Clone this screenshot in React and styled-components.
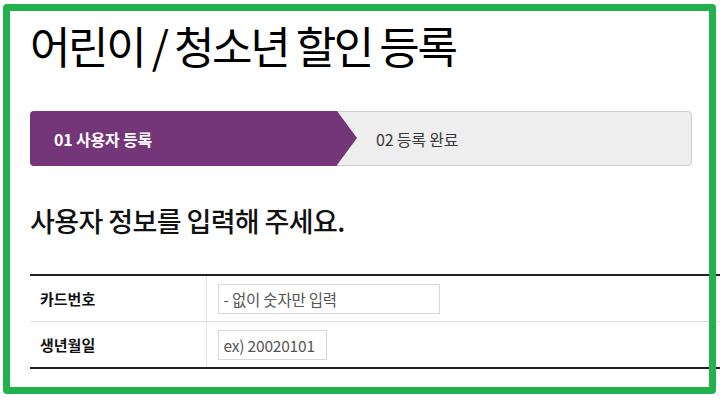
import React from 'react';
import styled, { createGlobalStyle } from 'styled-components';

const GlobalStyle = createGlobalStyle`
  html, body {
    margin: 0;
    padding: 0;
    background: #fff;
    overflow: hidden;
  }
  body {
    font-family: "Noto Sans CJK KR", "Noto Sans", sans-serif;
    color: #111;
  }
`;

const Page = styled.div`
  width: 720px;
  height: 401px;
  padding: 21px 0 0 30px;
  box-sizing: border-box;
`;

// green marker frame drawn over the screenshot
const Frame = styled.div`
  position: fixed;
  left: 3px;
  top: 4px;
  width: 713px;
  height: 390px;
  box-sizing: border-box;
  border: 7px solid #22b14c;
  border-radius: 4px;
  pointer-events: none;
`;

const Title = styled.h1`
  margin: 0;
  font-size: 44px;
  line-height: 48px;
  font-weight: 400;
  letter-spacing: -2.4px;
  color: #000;
`;

const Steps = styled.ol`
  display: flex;
  list-style: none;
  margin: 42px 0 0;
  padding: 0;
  width: 662px;
  height: 55px;
  box-sizing: border-box;
  border: 1px solid #cfcfcf;
  border-radius: 4px;
  background: #eeeeee;
`;

const Step = styled.li`
  position: relative;
  display: flex;
  align-items: center;
  box-sizing: border-box;
  font-size: 16px;
  letter-spacing: -0.2px;
  width: ${(p) => (p.$active ? '307px' : 'auto')};
  flex: ${(p) => (p.$active ? 'none' : '1')};
  margin: ${(p) => (p.$active ? '-1px 0 -1px -1px' : '0')};
  padding-left: ${(p) => (p.$active ? '24px' : '39px')};
  background: ${(p) => (p.$active ? '#743679' : 'transparent')};
  border-radius: ${(p) => (p.$active ? '4px 0 0 4px' : '0')};
  color: ${(p) => (p.$active ? '#fff' : '#3a3a3a')};
  font-weight: ${(p) => (p.$active ? 700 : 400)};

  ${(p) =>
    p.$active &&
    `
    &::after {
      content: '';
      position: absolute;
      left: 100%;
      top: 0;
      border-left: 20px solid #743679;
      border-top: 27.5px solid transparent;
      border-bottom: 27.5px solid transparent;
    }
  `}
`;

const Subtitle = styled.h2`
  margin: 38px 0 0;
  font-size: 27px;
  line-height: 34px;
  font-weight: 500;
  letter-spacing: -0.6px;
  color: #111;
`;

const Table = styled.table`
  margin-top: 36px;
  width: 690px;
  border-collapse: collapse;
  border-top: 2px solid #222;
  border-bottom: 2px solid #222;
`;

const Row = styled.tr`
  & + & {
    border-top: 1px solid #dcdcdc;
  }
`;

const Label = styled.th`
  width: 176px;
  height: 45px;
  padding: 0 0 0 10px;
  box-sizing: border-box;
  text-align: left;
  font-size: 15px;
  font-weight: 700;
  color: #111;
  border-right: 1px solid #e4e4e4;
`;

const Cell = styled.td`
  padding: 0 0 0 11px;
  height: 45px;
`;

const Input = styled.input`
  display: block;
  width: ${(p) => p.$width}px;
  height: 30px;
  box-sizing: border-box;
  border: 1px solid #d8d8d8;
  padding: 0 5px;
  font-family: "Noto Sans CJK KR", "Noto Sans", sans-serif;
  font-size: 15.5px;
  letter-spacing: -0.2px;
  color: #333;
  outline: none;

  &::placeholder {
    color: #555;
  }
`;

export default function App() {
  return (
    <>
      <GlobalStyle />
      <Page>
        <Title>어린이 / 청소년 할인 등록</Title>
        <Steps>
          <Step $active>01 사용자 등록</Step>
          <Step>02 등록 완료</Step>
        </Steps>
        <Subtitle>사용자 정보를 입력해 주세요.</Subtitle>
        <Table>
          <tbody>
            <Row>
              <Label>카드번호</Label>
              <Cell>
                <Input $width={222} placeholder="- 없이 숫자만 입력" />
              </Cell>
            </Row>
            <Row>
              <Label>생년월일</Label>
              <Cell>
                <Input $width={109} placeholder="ex) 20020101" />
              </Cell>
            </Row>
          </tbody>
        </Table>
      </Page>
      <Frame />
    </>
  );
}
